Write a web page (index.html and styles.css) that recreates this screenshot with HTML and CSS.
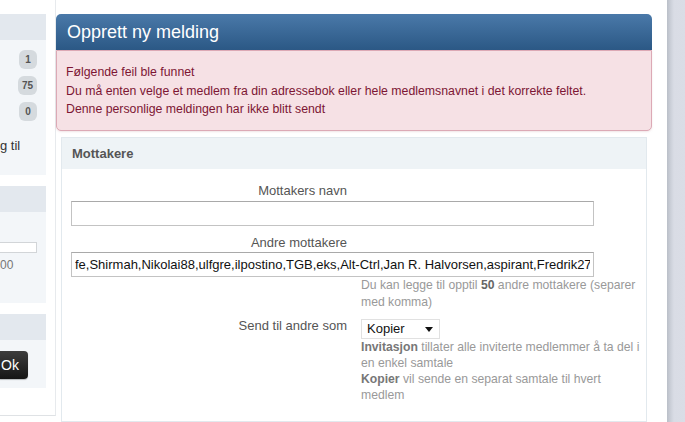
FILE: index.html
```html
<!DOCTYPE html>
<html lang="no">
<head>
<meta charset="utf-8">
<title>Opprett ny melding</title>
<link rel="stylesheet" href="styles.css">
</head>
<body>
<div class="page">
  <aside class="sidebar">
    <div class="side-inner">
      <section class="sblock">
        <div class="shead"></div>
        <div class="sbody b1">
          <span class="badge">1</span>
          <span class="badge">75</span>
          <span class="badge">0</span>
          <div class="stext">g til</div>
        </div>
      </section>
      <section class="sblock gap">
        <div class="shead"></div>
        <div class="sbody b2">
          <div class="sinput"></div>
          <div class="snum">00</div>
        </div>
      </section>
      <section class="sblock gap">
        <div class="shead"></div>
        <div class="sbody b3">
          <div class="okbtn">Ok</div>
        </div>
      </section>
    </div>
  </aside>

  <main class="main">
    <h1 class="title">Opprett ny melding</h1>
    <div class="errors">
      <div>Følgende feil ble funnet</div>
      <div>Du må enten velge et medlem fra din adressebok eller hele medlemsnavnet i det korrekte feltet.</div>
      <div>Denne personlige meldingen har ikke blitt sendt</div>
    </div>

    <div class="form">
      <div class="fhead">Mottakere</div>
      <div class="fbody">
        <div class="flabel">Mottakers navn</div>
        <input class="field f1" type="text" value="">
        <div class="flabel l2">Andre mottakere</div>
        <input class="field f2" type="text" value="fe,Shirmah,Nikolai88,ulfgre,ilpostino,TGB,eks,Alt-Ctrl,Jan R. Halvorsen,aspirant,Fredrik27">
        <div class="hint">Du kan legge til opptil <b>50</b> andre mottakere (separer med komma)</div>
        <div class="row">
          <div class="flabel rlabel">Send til andre som</div>
          <div class="rcol">
            <div class="select"><span>Kopier</span><svg class="caret" width="8" height="5" viewBox="0 0 8 5"><path d="M0 0H8L4 5Z" fill="#111"/></svg></div>
            <div class="explain"><b>Invitasjon</b> tillater alle inviterte medlemmer å ta del i en enkel samtale<br><b>Kopier</b> vil sende en separat samtale til hvert medlem</div>
          </div>
        </div>
      </div>
    </div>
  </main>

  <div class="strip"></div>
</div>
</body>
</html>
```

FILE: styles.css
```css
* { box-sizing: border-box; }
html, body { margin: 0; padding: 0; }
body {
  width: 685px;
  height: 422px;
  overflow: hidden;
  background: #fff;
  font-family: "Liberation Sans", Arial, sans-serif;
  color: #333;
}
.page {
  display: flex;
  height: 422px;
}

/* sidebar */
.sidebar { width: 56px; flex: none; }
.side-inner {
  height: 416px;
  padding-top: 14px;
  border-right: 1px solid #e7eaed;
  border-bottom: 1px solid #dfe2e5;
}
.sblock { width: 46px; }
.sblock.gap { margin-top: 11px; }
.shead { height: 26px; background: #e3e8ee; }
.sbody { background: #f3f6f9; }
.b1 {
  height: 135px;
  padding: 10px 9px 0 0;
  display: flex;
  flex-direction: column;
  align-items: flex-end;
  gap: 7px;
}
.badge {
  display: block;
  height: 19px;
  min-width: 18px;
  padding: 0 4px;
  border-radius: 6px;
  background: #d5dade;
  color: #555;
  font-size: 10px;
  font-weight: bold;
  line-height: 19px;
  text-align: center;
}
.stext {
  align-self: flex-start;
  margin-top: 10px;
  font-size: 13px;
  line-height: 16px;
  color: #333;
}
.b2 { height: 91px; padding-top: 30px; }
.sinput {
  width: 37px;
  height: 11px;
  background: #fff;
  border: 1px solid #d2d5d8;
  border-left: none;
}
.snum {
  margin-top: 4px;
  font-size: 12px;
  line-height: 16px;
  color: #777;
}
.b3 { height: 48px; padding-top: 11px; }
.okbtn {
  width: 28px;
  height: 28px;
  border-radius: 0 4px 4px 0;
  background: linear-gradient(#3d3d3d, #151515);
  color: #fff;
  font-size: 14px;
  line-height: 28px;
  text-align: right;
  padding-right: 9px;
  box-shadow: 0 1px 1px rgba(0,0,0,.25);
}

/* main */
.main { width: 596px; flex: none; }
.title {
  margin: 14px 0 0;
  height: 36px;
  padding-left: 11px;
  border-radius: 5px 5px 0 0;
  background: linear-gradient(#4a79a9, #2b5885);
  color: #fff;
  font-size: 18px;
  font-weight: normal;
  line-height: 37px;
}
.errors {
  border: 1px solid #dca9b5;
  border-radius: 0 0 5px 5px;
  background: #f6e1e5;
  color: #7d1634;
  font-size: 12.3px;
  line-height: 18.5px;
  padding: 12px 10px 11px 9px;
  box-shadow: 0 1px 2px rgba(200,150,160,.25);
}
.form {
  margin: 6px 5px 0;
  height: 285px;
  border: 1px solid #e2e9ee;
}
.fhead {
  height: 31px;
  background: #eef3f6;
  padding-left: 10px;
  font-size: 13px;
  font-weight: bold;
  color: #555;
  line-height: 31px;
}
.fbody { padding-top: 14px; }
.flabel {
  width: 285px;
  text-align: right;
  font-size: 13px;
  line-height: 16px;
  color: #555;
}
.l2 { margin-top: 9px; }
.field {
  display: block;
  margin-left: 9px;
  width: 523px;
  height: 25px;
  border: 1px solid #c3c3c3;
  border-top-color: #a9a9a9;
  padding: 0 3px;
  font-family: "Liberation Sans", Arial, sans-serif;
  font-size: 13px;
  color: #111;
  background: #fff;
  outline: none;
}
.f1 { margin-top: 2px; }
.f2 { margin-top: 1px; }
.hint {
  margin-left: 299px;
  width: 282px;
  font-size: 12.2px;
  line-height: 17px;
  color: #999;
}
.hint b { color: #666; }
.row {
  display: flex;
  margin-top: 8px;
  gap: 14px;
}
.rlabel { margin-top: -1px; }
.rcol { width: 282px; }
.select {
  width: 79px;
  height: 20px;
  border: 1px solid #e1e1e1;
  background: #fff;
  display: flex;
  align-items: center;
  justify-content: space-between;
  padding: 0 6px 0 5px;
  font-size: 13px;
  color: #111;
}
.caret { display: block; margin-top: 1px; }
.explain {
  font-size: 12.2px;
  line-height: 16px;
  color: #999;
}
.explain b { color: #777; }

/* right strip */
.strip {
  margin-left: 15px;
  width: 18px;
  flex: none;
  background: linear-gradient(to right, #babfc8 0, #cdd1da 4px, #d9dce5 7px, #dadde6);
}
```
